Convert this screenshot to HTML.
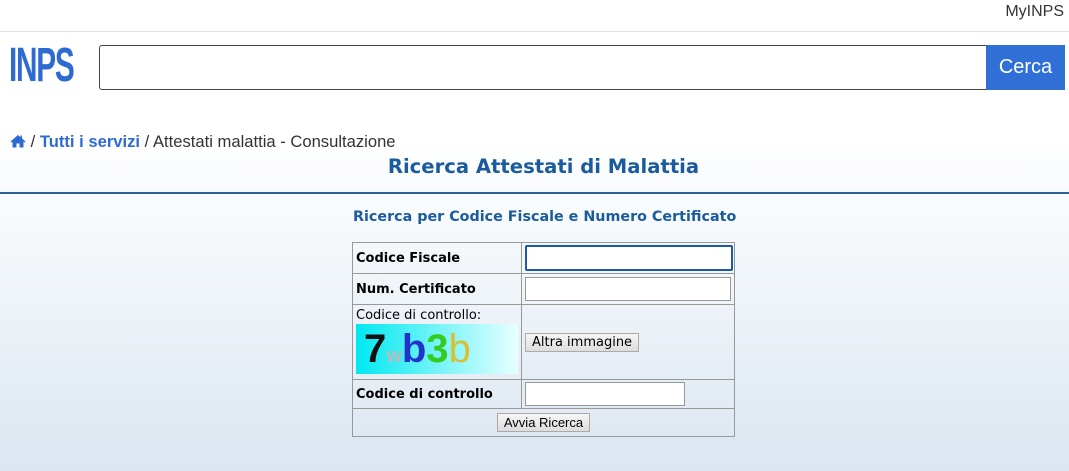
<!DOCTYPE html>
<html><head><meta charset="utf-8"><style>
*{box-sizing:border-box;margin:0;padding:0}
html,body{width:1069px;height:471px;overflow:hidden;font-family:"Liberation Sans",sans-serif;background:#fff;position:relative}
.abs{position:absolute}
.top{left:0;top:0;width:1069px;height:193px;background:linear-gradient(#fff 140px,#f8fafc)}
.grad{left:0;top:194px;width:1069px;height:277px;background:linear-gradient(#fafcfd,#dbe6f1)}
.line{left:0;top:192px;width:1069px;height:2px;background:#2a6690}
table{table-layout:fixed}
td{border:1px solid #999;font-family:"DejaVu Sans",sans-serif;font-size:13px;color:#000;padding:0 3px;overflow:hidden;white-space:nowrap}
.b{font-weight:bold}
input.t{border:1px solid #999;background:#fff;height:24px;display:block}
.btn{display:inline-block;border:1px solid #aaa;background:linear-gradient(#f6f6f6,#ddd);font-size:13px;padding:1px 6px;font-family:"DejaVu Sans",sans-serif}
</style></head><body>
<div class="abs top"></div>
<div class="abs grad"></div>
<div class="abs line"></div>
<div class="abs" style="right:5px;top:3px;font-size:16px;color:#333">MyINPS</div>
<div class="abs" style="left:0;top:31px;width:1069px;height:1px;background:#dde6ee"></div>
<div class="abs" style="left:9px;top:42px;font-size:48px;font-weight:bold;color:#2e6bd1;letter-spacing:-2px;transform:scaleX(0.62);transform-origin:left;line-height:48px">INPS</div>
<div class="abs" style="left:99px;top:45px;width:888px;height:45px;border:1px solid #444;border-radius:3px 0 0 3px;background:#fff"></div>
<div class="abs" style="left:986px;top:45px;width:79px;height:45px;background:#2f6fd6;color:#fff;font-size:20px;text-align:center;line-height:45px">Cerca</div>
<div class="abs" style="left:10px;top:132px;font-size:16.6px;color:#333">
<svg width="16" height="14" viewBox="0 0 16 14" style="vertical-align:-1px"><path d="M8 1L0.5 7.5 1.5 8.5 2.5 7.6V13.5H6.5V9.5H9.5V13.5H13.5V7.6L14.5 8.5 15.5 7.5 12 4.5V1.5H10.5V3.2Z" fill="#2e6bd1"/></svg>
/ <b style="color:#2e6bd1">Tutti i servizi</b> / Attestati malattia - Consultazione</div>
<div class="abs" style="left:0;width:1087px;top:155px;text-align:center;font-family:'DejaVu Sans',sans-serif;font-weight:bold;font-size:19.6px;color:#1a5a9e">Ricerca Attestati di Malattia</div>
<div class="abs" style="left:353px;top:209px;font-family:'DejaVu Sans',sans-serif;font-weight:bold;font-size:14.3px;color:#1a5a9e">Ricerca per Codice Fiscale e Numero Certificato</div>
<table class="abs" style="left:352px;top:242px;width:382px;border-collapse:collapse">
<colgroup><col style="width:169px"><col style="width:213px"></colgroup>
<tr style="height:31px"><td class="b">Codice Fiscale</td><td><input class="t" style="width:208px;height:26px;border:2px solid #1c5aa8;border-radius:2px"></td></tr>
<tr style="height:31px"><td class="b">Num. Certificato</td><td><input class="t" style="width:206px"></td></tr>
<tr style="height:75px"><td style="vertical-align:top;padding-top:3px">Codice di controllo:<br>
<div style="width:162px;height:50px;margin-top:1px;background:linear-gradient(90deg,#00e8f0,#e8ffff);font-size:40px;font-weight:bold;line-height:50px;padding-left:8px;font-family:'Liberation Sans',sans-serif"><span style="color:#111">7</span><span style="color:#bbb;font-size:20px">w</span><span style="color:#2233cc">b</span><span style="color:#33cc22">3</span><span style="color:#d8c030;font-weight:normal">b</span></div></td>
<td><span class="btn">Altra immagine</span></td></tr>
<tr style="height:29px"><td class="b">Codice di controllo</td><td><input class="t" style="width:160px"></td></tr>
<tr style="height:28px"><td colspan="2" style="text-align:center"><span class="btn" style="font-family:'Liberation Sans',sans-serif">Avvia Ricerca</span></td></tr>
</table>
</body></html>
